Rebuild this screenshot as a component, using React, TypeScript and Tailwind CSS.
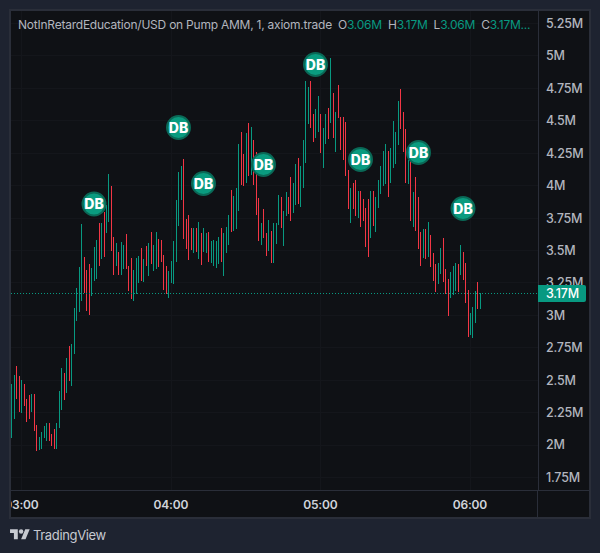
const G = "#089981"
const R = "#f23645"

// [pixel column, high y, low y, up?]
const bars: [number, number, number, number][] = [
  [11,384,438,1],[14,375,419,1],[16,366,399,0],[19,376,412,0],[21,380,413,1],[24,384,406,0],[26,399,422,0],[29,395,419,0],
  [31,394,412,1],[34,394,431,0],[36,425,451,0],[39,437,450,1],[41,432,449,1],[44,426,438,1],[46,423,441,1],[49,423,441,0],
  [51,434,446,0],[54,429,449,0],[56,423,449,1],[59,391,428,1],[61,368,410,1],[64,373,400,0],[66,358,393,1],[69,346,381,0],
  [71,344,386,1],[74,308,354,1],[76,288,321,1],[79,267,312,1],[81,224,301,1],[84,257,293,0],[86,270,311,0],[89,264,315,0],
  [91,268,296,1],[94,247,281,1],[96,240,279,1],[99,223,266,0],[101,223,259,1],[104,212,257,0],[106,205,233,1],[108,174,222,1],
  [111,186,251,0],[113,237,275,0],[116,243,266,1],[118,252,275,0],[121,242,275,1],[123,245,269,1],[126,234,269,0],[128,266,291,0],
  [131,258,299,0],[133,270,301,1],[136,258,294,1],[138,256,283,1],[141,248,281,0],[143,259,282,1],[146,246,266,0],[148,243,276,1],
  [151,232,264,0],[153,245,271,1],[156,232,269,1],[158,239,267,0],[161,240,262,0],[163,255,290,0],[166,266,294,0],[168,271,298,1],
  [171,261,283,1],[173,241,284,1],[176,200,262,1],[178,172,226,1],[181,166,200,1],[183,159,239,0],[186,219,249,0],[188,215,260,0],
  [191,228,250,0],[193,228,253,1],[196,228,252,0],[198,222,259,1],[201,233,265,0],[203,228,252,1],[206,233,253,1],[208,232,262,0],
  [211,241,263,1],[213,240,266,1],[216,241,268,1],[218,237,264,1],[221,228,262,0],[223,233,276,1],[226,227,253,1],[228,215,245,1],
  [231,190,232,0],[233,196,231,1],[236,188,229,1],[238,144,211,1],[241,132,185,0],[243,154,186,0],[246,133,183,1],[248,123,176,0],
  [251,127,175,1],[253,140,185,0],[256,152,215,0],[258,198,241,0],[261,223,245,1],[263,209,238,0],[266,233,256,0],[268,220,251,1],
  [271,231,263,0],[273,223,263,1],[276,223,244,1],[278,195,225,1],[281,197,228,0],[283,211,246,1],[286,192,216,1],[288,197,214,0],
  [290,177,221,0],[293,183,213,1],[295,164,205,1],[298,158,204,0],[300,166,207,1],[303,140,188,1],[305,81,163,1],[308,87,124,1],
  [310,81,128,0],[313,114,142,0],[315,109,138,1],[318,96,132,1],[320,114,153,0],[323,128,168,1],[325,114,144,1],[328,108,139,0],
  [330,58,123,1],[333,93,138,0],[335,112,152,1],[338,85,118,0],[340,117,150,0],[343,117,160,0],[345,122,176,0],[348,170,209,0],
  [350,188,223,1],[353,183,209,0],[355,180,216,0],[358,191,218,1],[360,191,227,0],[363,199,221,0],[365,208,247,0],[368,199,257,0],
  [370,191,238,1],[373,191,226,0],[375,197,232,1],[378,180,208,1],[380,166,194,1],[383,151,186,1],[385,144,184,1],[388,151,197,0],
  [390,148,183,1],[393,121,168,1],[395,132,164,1],[398,101,145,1],[400,89,129,0],[403,112,152,0],[405,129,183,0],[408,160,184,1],
  [410,160,221,0],[413,192,227,1],[415,177,231,0],[418,197,249,0],[420,232,266,0],[423,229,258,1],[425,229,259,0],[428,222,257,1],
  [430,235,267,0],[433,253,281,0],[435,264,292,0],[438,263,284,1],[440,248,274,1],[443,238,282,0],[445,269,294,0],[448,279,316,0],
  [450,272,298,1],[453,266,295,1],[455,263,291,1],[458,264,292,0],[460,245,275,1],[463,252,280,0],[465,263,303,0],[468,290,337,0],
  [470,313,335,1],[472,307,338,1],[475,291,323,1],[477,282,309,0],[480,293,309,1],
]

const badges = [[94,204],[178.5,127.5],[203.5,183.5],[263.5,164.5],[315.5,64.5],[360.5,159.5],[418.5,152.5],[463,208.5]]
const prices = ["5.25M","5M","4.75M","4.5M","4.25M","4M","3.75M","3.5M","3.25M","3M","2.75M","2.5M","2.25M","2M","1.75M"]

const Chart = () => (
  <svg viewBox="11 11 527 479" className="block w-[527px] h-[479px]">
    {prices.map((_, i) => (
      <rect key={i} x={11} y={Math.round(23 + i * 32.43)} width={527} height={1} fill="#14161b" />
    ))}
    {[21, 171, 320, 470].map(x => (
      <rect key={x} x={x} y={11} width={1} height={479} fill="#14161b" />
    ))}
    <g shapeRendering="crispEdges">
      {bars.map(([x, top, bottom, up]) => (
        <rect key={x} x={x} y={top} width={1} height={bottom - top} fill={up ? G : R} />
      ))}
    </g>
    <line x1={11} x2={538} y1={293.5} y2={293.5} stroke={G} strokeDasharray="1 2" />
    {badges.map(([x, y]) => (
      <g key={x}>
        <circle cx={x} cy={y} r={11.5} fill="#0a9b7f" stroke="#0a6856" strokeWidth={2} />
        <text x={x} y={y + 5} textAnchor="middle" fontSize={14} fontWeight={800} fill="#ffffff">DB</text>
      </g>
    ))}
  </svg>
)

const Ohlc = ({ k, v }: { k: string; v: string }) => (
  <span>{k}<span className="text-[#089981]">{v}</span></span>
)

export default function App() {
  return (
    <div className="w-[600px] h-[553px] bg-[#1e2330] pt-[9px] pl-[9px] font-['Inter',sans-serif] overflow-hidden">
      <div className="w-[582px] h-[510px] border-2 border-[#2a2e39] bg-[#0f1115] flex flex-col">
        <div className="flex h-[479px]">
          <div className="relative w-[527px]">
            <Chart />
            <div className="absolute left-[7px] top-[6px] flex h-[16px] items-center text-[12px] leading-4 tracking-[-0.23px] text-[#b2b5be] whitespace-nowrap">
              <span>NotInRetardEducation/USD on Pump AMM, 1, axiom.trade</span>
              <div className="flex ml-[6px] gap-[6px]">
                <Ohlc k="O" v="3.06M" />
                <Ohlc k="H" v="3.17M" />
                <Ohlc k="L" v="3.06M" />
                <Ohlc k="C" v="3.17M..." />
              </div>
            </div>
          </div>
          <div className="relative flex-1 border-l border-[#2a2e39]">
            <div className="flex flex-col pl-[7px] pt-px text-[12.5px] font-medium tracking-[-0.2px] text-[#b2b5be]">
              {prices.map(p => (
                <div key={p} className="h-[32.43px] leading-[24px]">{p}</div>
              ))}
            </div>
            <div className="absolute -left-px top-[274px] w-[48px] h-[17px] bg-[#089981] rounded-r-[2px] pl-[8px] text-[12.5px] leading-[17px] font-medium tracking-[-0.2px] text-white">3.17M</div>
          </div>
        </div>
        <div className="flex flex-1 border-t border-[#2a2e39]">
          <div className="flex w-[527px] overflow-hidden border-r border-[#2a2e39] text-[12px] font-semibold leading-[27px] tracking-[-0.2px] text-[#d1d4dc]">
            <div className="shrink-0 w-[149.5px] -ml-[64.4px] text-center">03:00</div>
            <div className="shrink-0 w-[149.5px] text-center">04:00</div>
            <div className="shrink-0 w-[149.5px] text-center">05:00</div>
            <div className="shrink-0 w-[149.5px] text-center">06:00</div>
          </div>
        </div>
      </div>
      <div className="flex items-center gap-[3px] pl-px pt-[8px] text-[#c7cad1]">
        <svg viewBox="0 0 36 28" className="w-[20px] h-[15.5px]" fill="currentColor">
          <path d="M14 22H7V11H0V4h14v18zM28 22h-8l7.5-18h8L28 22z" />
          <circle cx="20" cy="8" r="4" />
        </svg>
        <span className="text-[13px] leading-[16px] tracking-[-0.35px]">TradingView</span>
      </div>
    </div>
  )
}
